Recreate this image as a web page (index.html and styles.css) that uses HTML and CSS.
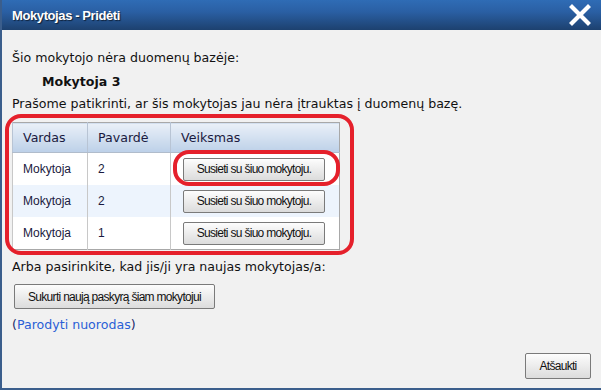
FILE: index.html
```html
<!DOCTYPE html>
<html>
<head>
<meta charset="utf-8">
<link rel="stylesheet" href="styles.css">
</head>
<body>
<div class="dialog">
  <div class="titlebar">
    <span class="title">Mokytojas - Pridėti</span>
    <svg class="close" width="24" height="22" viewBox="0 0 24 22"><path d="M4 3 L20 19 M20 3 L4 19" stroke="#fff" stroke-width="4.2" stroke-linecap="square"/></svg>
  </div>
  <div class="content">
    <p class="line first">Šio mokytojo nėra duomenų bazėje:</p>
    <p class="line name">Mokytoja 3</p>
    <p class="line check">Prašome patikrinti, ar šis mokytojas jau nėra įtrauktas į duomenų bazę.</p>
    <div class="tablewrap">
      <table class="grid">
        <thead>
          <tr><th class="c1">Vardas</th><th class="c2">Pavardė</th><th class="c3">Veiksmas</th></tr>
        </thead>
        <tbody>
          <tr><td>Mokytoja</td><td>2</td><td><button class="btn rowbtn">Susieti su šiuo mokytoju.</button></td></tr>
          <tr class="alt"><td>Mokytoja</td><td>2</td><td><button class="btn rowbtn">Susieti su šiuo mokytoju.</button></td></tr>
          <tr><td>Mokytoja</td><td>1</td><td><button class="btn rowbtn">Susieti su šiuo mokytoju.</button></td></tr>
        </tbody>
      </table>
      <div class="mark big"></div>
      <div class="mark small"></div>
    </div>
    <p class="line other">Arba pasirinkite, kad jis/ji yra naujas mokytojas/a:</p>
    <button class="btn create">Sukurti naują paskyrą šiam mokytojui</button>
    <p class="line help">(<a href="#" class="link">Parodyti nuorodas</a>)</p>
    <div class="footer">
      <button class="btn cancel">Atšaukti</button>
    </div>
  </div>
</div>
</body>
</html>
```
FILE: styles.css
```css
html, body {
  margin: 0;
  padding: 0;
  background: #f1f1f1;
}
.dialog {
  width: 599px;
  height: 388px;
  border-left: 2px solid #3b5e8c;
  border-bottom: 2px solid #3b5e8c;
  background: #f1f1f1;
  display: flex;
  flex-direction: column;
  font-family: "DejaVu Sans", Verdana, sans-serif;
  color: #111;
}
.titlebar {
  height: 30px;
  flex: none;
  background: linear-gradient(#2f6cb5 0%, #2a5fa3 40%, #1d416f 100%);
  display: flex;
  align-items: center;
  justify-content: space-between;
  padding: 0 9px 0 10px;
}
.title {
  color: #fff;
  font-family: "Liberation Sans", Arial, sans-serif;
  font-weight: bold;
  font-size: 13px;
  letter-spacing: -0.4px;
  text-shadow: 1px 1px 1px rgba(0,0,0,0.6);
}
.close {
  display: block;
}
.content {
  flex: 1;
  display: flex;
  flex-direction: column;
  align-items: flex-start;
  padding: 0 10px 0 10px;
}
.line {
  margin: 0;
  font-size: 12.6px;
  line-height: 16px;
}
.first { margin-top: 20px; }
.name {
  margin-top: 8px;
  padding-left: 30px;
  font-weight: bold;
}
.check { margin-top: 6px; }
.tablewrap {
  position: relative;
  margin-top: 10px;
}
.grid {
  border-collapse: collapse;
  border: 1px solid #a8a8a8;
  background: #fff;
  width: 328px;
}
.grid th {
  height: 29px;
  padding: 0 0 0 10px;
  text-align: left;
  font-weight: normal;
  font-size: 12.6px;
  color: #1a1a40;
  background: linear-gradient(#eaf0f8, #bcd0e8);
  border-left: 1px solid #b8c4d4;
  border-bottom: 1px solid #b0bccb;
}
.grid td {
  height: 32px;
  padding: 0 0 0 10px;
  font-family: "Liberation Sans", Arial, sans-serif;
  font-size: 12px;
  color: #1a1a40;
  border-left: 1px solid #c8c8c8;
}
.grid .c1 { width: 64px; }
.grid .c2 { width: 72px; }
.grid tr.alt td { background: #edf4fd; }
.btn {
  font-family: "Liberation Sans", Arial, sans-serif;
  font-size: 12px;
  letter-spacing: -0.7px;
  color: #111;
  border: 1px solid #7a7a7a;
  border-radius: 2px;
  background: linear-gradient(#fdfdfd 0%, #ececec 50%, #dcdcdc 100%);
  padding: 0;
  margin: 0;
}
.rowbtn {
  width: 142px;
  height: 23px;
  margin-left: 2px;
}
.mark {
  position: absolute;
  border: 4px solid #e5202b;
  pointer-events: none;
}
.mark.big {
  left: -7px;
  top: -8px;
  width: 341px;
  height: 133px;
  border-radius: 16px;
}
.mark.small {
  left: 161px;
  top: 28px;
  width: 159px;
  height: 28px;
  border-radius: 16px;
}
.other { margin-top: 9px; }
.create {
  margin-top: 9px;
  margin-left: 2px;
  width: 201px;
  height: 25px;
}
.help { margin-top: 8px; color: #1a2a6a; }
.link {
  color: #2a5fd6;
  text-decoration: none;
}
.footer {
  margin-top: auto;
  align-self: stretch;
  display: flex;
  justify-content: flex-end;
  padding-bottom: 9px;
}
.cancel {
  width: 66px;
  height: 26px;
}
```
